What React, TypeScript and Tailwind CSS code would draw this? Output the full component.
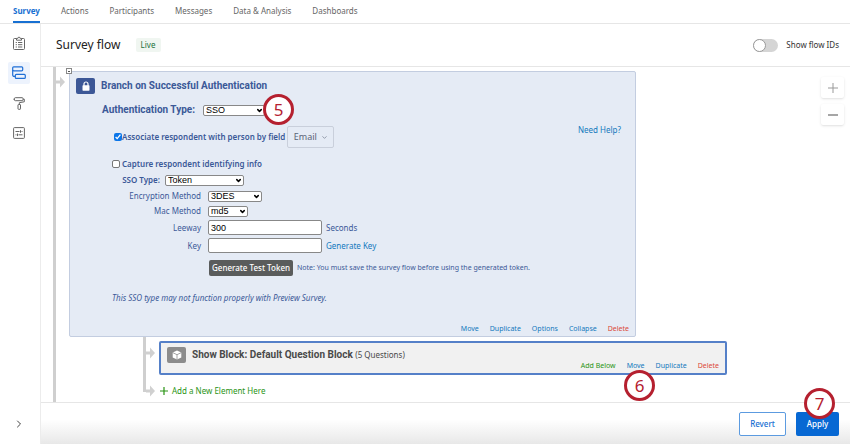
import { ChevronDown, ChevronRight } from 'lucide-react'

import React from 'react'

const NAV_ITEMS = [
  'Survey',
  'Actions',
  'Participants',
  'Messages',
  'Data & Analysis',
  'Dashboards',
]

function ClipboardIcon() {
  return (
    <svg width="12" height="14" viewBox="0 0 12 14" fill="none" stroke="#666" strokeWidth="1">
      <path d="M3.5 2.5H1.5a1 1 0 0 0-1 1v9a1 1 0 0 0 1 1h9a1 1 0 0 0 1-1v-9a1 1 0 0 0-1-1h-2" />
      <path d="M3.5 4.2V2.4H4.8a1.2 1.2 0 0 1 2.4 0H8.5v1.8z" />
      <path d="M2.7 6.5h1.2M5 6.5h4.3M2.7 8.7h1.2M5 8.7h4.3M2.7 11h1.2M5 11h4.3" />
    </svg>
  )
}

function FlowIcon() {
  return (
    <svg width="14" height="14" viewBox="0 0 14 14" fill="none" stroke="#1f6fd6" strokeWidth="1.2">
      <rect x="0.7" y="0.8" width="10" height="4" rx="1" />
      <rect x="3.3" y="8.4" width="10" height="4" rx="1" />
      <path d="M0.7 4v5a1.4 1.4 0 0 0 1.4 1.4h1.2" />
    </svg>
  )
}

function RollerIcon() {
  return (
    <svg width="12" height="13" viewBox="0 0 12 13" fill="none" stroke="#666" strokeWidth="1">
      <rect x="1.5" y="0.7" width="8.5" height="3" rx="0.8" />
      <path d="M1.5 2.2H0.3M10 2.2h1.3v2.6L6.3 5.7v1.8" />
      <rect x="5" y="7.5" width="2.5" height="4.8" rx="0.5" />
    </svg>
  )
}

function SettingsIcon() {
  return (
    <svg width="12" height="12" viewBox="0 0 12 12" fill="none" stroke="#666" strokeWidth="1">
      <rect x="0.6" y="0.6" width="10.8" height="10.8" rx="0.8" />
      <path d="M2.5 4.5h4M8.5 4.5h1M7.5 3.2v2.6M2.5 7.8h1M5.5 7.8h4M4.5 6.5v2.6" />
    </svg>
  )
}

function BranchArrow() {
  return (
    <svg width="9" height="12" viewBox="0 0 9 12" fill="#d0d0d0" className="shrink-0">
      <path d="M0 4.5h4V0.5L9 6l-5 5.5V7.5H0z" />
    </svg>
  )
}

interface StepBadgeProps {
  step: number
  className: string
}
function StepBadge({ step, className }: StepBadgeProps) {
  return (
    <span
      className={`absolute z-10 flex h-[31px] w-[31px] items-center justify-center rounded-full border-[3px] border-[#b5202f] bg-white text-[17px] leading-none text-[#b5202f] ${className}`}
    >
      {step}
    </span>
  )
}

interface FlowSelectProps {
  id: string
  options: string[]
  className: string
}
function FlowSelect({ id, options, className }: FlowSelectProps) {
  return (
    <div className={`relative ${className}`}>
      <select
        id={id}
        className="block h-[11px] w-full appearance-none rounded-xs border border-[#888] bg-white pl-0.5 font-['Liberation_Sans',sans-serif] text-[9px] leading-[9px] text-black"
      >
        {options.map((option) => (
          <option key={option}>{option}</option>
        ))}
      </select>
      <ChevronDown
        size={7}
        strokeWidth={5}
        className="pointer-events-none absolute top-0.5 right-0.5 text-black"
      />
    </div>
  )
}

interface ActionLinksProps {
  actions: string[]
}
function ActionLinks({ actions }: ActionLinksProps) {
  return (
    <div className="flex justify-end gap-[11px] text-[7px] leading-3 text-[#1379bd]">
      {actions.map((action) => (
        <a
          key={action}
          href="#"
          className={
            action === 'Delete'
              ? 'text-[#dc4a38]'
              : action === 'Add Below'
                ? 'text-[#2a9415]'
                : ''
          }
        >
          {action}
        </a>
      ))}
    </div>
  )
}

function AuthenticationBlock() {
  return (
    <section className="relative w-[567px] rounded-xs border border-[#c3cde0] bg-[#e5ebf5] pb-px text-[#3b5998]">
      <button
        aria-label="Collapse block"
        className="absolute -top-1 -left-1 flex h-1.5 w-1.5 items-center justify-center border border-[#888] bg-white"
      >
        <span className="h-px w-0.5 bg-[#555]" />
      </button>
      <div className="flex items-center gap-1.5 pt-1.5 pl-1.5">
        <span className="flex h-4 w-[19px] items-center justify-center rounded-xs bg-[#3c5796]">
          <svg width="8" height="10" viewBox="0 0 8 10">
            <path d="M2 5V3a2 2 0 0 1 4 0v2" fill="none" stroke="#fff" strokeWidth="1.2" />
            <rect x="0.5" y="4.3" width="7" height="5.4" rx="0.6" fill="#fff" />
          </svg>
        </span>
        <h2 className="font-[Roboto,sans-serif] text-[10px] leading-4 font-bold">
          Branch on Successful Authentication
        </h2>
      </div>
      <div className="relative mt-2 flex items-center gap-2 pl-8">
        <label
          htmlFor="auth-type"
          className="font-[Roboto,sans-serif] text-[10px] leading-4 font-bold"
        >
          Authentication Type:
        </label>
        <FlowSelect id="auth-type" options={['SSO']} className="w-[62px]" />
        <StepBadge step={5} className="-top-2 left-[193px]" />
      </div>
      <div className="mt-2 flex items-center pl-11">
        <label className="flex items-center text-[8px] leading-3 font-semibold">
          <input type="checkbox" defaultChecked className="h-2 w-2 accent-[#0b75e8]" />
          Associate respondent with person by field
        </label>
        <button className="ml-0.5 flex h-[22px] w-[47px] items-center justify-center gap-1 rounded-xs border border-[#c9cfdb] text-[9px] text-[#5b6478]">
          Email
          <ChevronDown size={7} />
        </button>
        <a href="#" className="mr-3.5 -mt-3.5 ml-auto text-[8px] leading-3 text-[#1379bd]">
          Need Help?
        </a>
      </div>
      <div className="mt-2.5 pl-[42px]">
        <label className="flex items-center gap-0.5 text-[8px] leading-3 font-semibold">
          <input
            type="checkbox"
            className="h-2 w-2 appearance-none rounded-xs border border-[#777] bg-white"
          />
          Capture respondent identifying info
        </label>
      </div>
      <div className="mt-1 flex items-center gap-[5px]">
        <label htmlFor="sso-type" className="w-[90px] text-right text-[8px] leading-3 font-semibold">
          SSO Type:
        </label>
        <FlowSelect id="sso-type" options={['Token']} className="w-[79px]" />
      </div>
      <div className="mt-1 grid grid-cols-[131px_1fr] items-center gap-x-[7px] gap-y-[3px] text-[8px] leading-3">
        <label htmlFor="encryption" className="text-right">
          Encryption Method
        </label>
        <FlowSelect id="encryption" options={['3DES']} className="w-[54px]" />
        <label htmlFor="mac" className="text-right">
          Mac Method
        </label>
        <FlowSelect id="mac" options={['md5']} className="w-10" />
        <label htmlFor="leeway" className="text-right">
          Leeway
        </label>
        <div className="flex items-center gap-1">
          <input
            id="leeway"
            defaultValue="300"
            className="h-[15px] w-[114px] rounded-xs border border-[#888] bg-white px-0.5 font-['Liberation_Sans',sans-serif] text-[9px] text-black"
          />
          Seconds
        </div>
        <label htmlFor="key" className="text-right">
          Key
        </label>
        <div className="flex items-center gap-1">
          <input
            id="key"
            className="h-[15px] w-[114px] rounded-xs border border-[#888] bg-white px-0.5 font-['Liberation_Sans',sans-serif] text-[9px] text-black"
          />
          <a href="#" className="text-[#1379bd]">
            Generate Key
          </a>
        </div>
      </div>
      <div className="mt-[7px] flex items-center gap-1 pl-[139px]">
        <button className="h-4 w-[84px] rounded-xs bg-[#5a5c5c] text-[8px] leading-4 font-medium whitespace-nowrap text-white">
          Generate Test Token
        </button>
        <span className="text-[7px]">
          Note: You must save the survey flow before using the generated token.
        </span>
      </div>
      <p className="mt-4 pl-[42px] text-[8px] leading-3 italic">
        This SSO type may not function properly with Preview Survey.
      </p>
      <div className="mt-[19px] pr-1.5">
        <ActionLinks actions={['Move', 'Duplicate', 'Options', 'Collapse', 'Delete']} />
      </div>
    </section>
  )
}

function QuestionBlock() {
  return (
    <section className="relative h-[34px] w-[568px] rounded-xs border-2 border-[#5580c8] bg-[#f1f1f1]">
      <div className="flex items-center gap-1.5 pt-1 pl-1.5">
        <span className="flex h-4 w-[19px] items-center justify-center rounded-xs bg-[#8c8c8c]">
          <svg width="10" height="10" viewBox="0 0 10 10">
            <path d="M5 0.5L9.3 2.6v4.8L5 9.6 0.7 7.4V2.6z" fill="#fff" />
            <path d="M0.7 2.6L5 4.7l4.3-2.1M5 4.7v4.9" fill="none" stroke="#8c8c8c" strokeWidth="0.8" />
          </svg>
        </span>
        <h3 className="font-[Roboto,sans-serif] text-[10px] leading-4 font-bold text-[#4a4a4a]">
          Show Block: Default Question Block{' '}
          <span className="font-['Noto_Sans',sans-serif] text-[8px] font-normal">
            (5 Questions)
          </span>
        </h3>
      </div>
      <div className="-mt-[3px] pr-1.5">
        <ActionLinks actions={['Add Below', 'Move', 'Duplicate', 'Delete']} />
      </div>
      <StepBadge step={6} className="top-[27px] right-[70px]" />
    </section>
  )
}

function App() {
  return (
    <div className="flex h-screen flex-col overflow-hidden bg-white font-['Noto_Sans',sans-serif] text-[#333]">
      <nav className="flex h-6 shrink-0 gap-[21px] border-b border-[#e6e6e6] pl-[13px] text-[8px] leading-[22px] text-[#666]">
        {NAV_ITEMS.map((item, index) => (
          <a
            key={item}
            href="#"
            className={index === 0 ? 'border-b-2 border-[#1770d2] font-bold text-[#1770d2]' : ''}
          >
            {item}
          </a>
        ))}
      </nav>
      <div className="flex min-h-0 flex-1">
        <aside className="flex w-[41px] shrink-0 flex-col items-center gap-2 border-r border-[#ececec] pt-2 pr-0.5">
          <button aria-label="Builder" className="flex h-[22px] w-[22px] items-center justify-center">
            <ClipboardIcon />
          </button>
          <button
            aria-label="Survey flow"
            className="flex h-[22px] w-[22px] items-center justify-center rounded-xs bg-[#edf3fd]"
          >
            <FlowIcon />
          </button>
          <button aria-label="Look and feel" className="flex h-[22px] w-[22px] items-center justify-center">
            <RollerIcon />
          </button>
          <button aria-label="Survey options" className="flex h-[22px] w-[22px] items-center justify-center">
            <SettingsIcon />
          </button>
          <button aria-label="Expand menu" className="mt-auto mb-3.5">
            <ChevronRight size={12} className="text-[#444]" />
          </button>
        </aside>
        <main className="flex min-w-0 flex-1 flex-col">
          <header className="flex h-[43px] shrink-0 items-center border-b border-[#e6e6e6] pr-[11px] pl-[15px]">
            <h1 className="text-[12px] leading-4 text-[#222]">Survey flow</h1>
            <span className="ml-[15px] flex h-3.5 w-[25px] items-center justify-center rounded-xs bg-[#f0f6f1] text-[8px] text-[#23713d]">
              Live
            </span>
            <label className="ml-auto flex items-center gap-2 text-[8px] text-[#333]">
              <input
                type="checkbox"
                className="h-[13px] w-[25px] appearance-none rounded-full bg-[#d5d5d5] before:block before:h-[13px] before:w-[13px] before:rounded-full before:border before:border-[#999] before:bg-white before:content-['']"
              />
              Show flow IDs
            </label>
          </header>
          <div className="relative flex min-h-0 flex-1 overflow-hidden">
            <div className="ml-3 flex self-stretch">
              <div className="w-[3px] bg-[#cfcfcf]" />
              <div className="pt-[9px]">
                <BranchArrow />
              </div>
            </div>
            <div className="ml-1 pt-1">
              <AuthenticationBlock />
              <div className="ml-[74px] flex">
                <div className="h-[55px] w-[3px] bg-[#cfcfcf]" />
                <div className="flex flex-col pt-1">
                  <div className="flex gap-1">
                    <div className="pt-1.5">
                      <BranchArrow />
                    </div>
                    <QuestionBlock />
                  </div>
                  <div className="mt-2.5 flex items-center gap-[5px]">
                    <BranchArrow />
                    <button className="flex items-center gap-1 text-[8px] leading-3 text-[#2a9415]">
                      <svg width="8" height="8" viewBox="0 0 8 8" stroke="#2a9415" strokeWidth="1.2">
                        <path d="M4 0v8M0 4h8" />
                      </svg>
                      Add a New Element Here
                    </button>
                  </div>
                </div>
              </div>
            </div>
            <div className="absolute top-2.5 right-1.5 flex flex-col gap-1.5">
              <button
                aria-label="Zoom in"
                className="flex h-[21px] w-[23px] items-center justify-center rounded-xs bg-white shadow-sm"
              >
                <svg width="10" height="10" viewBox="0 0 10 10" stroke="#999">
                  <path d="M5 0v10M0 5h10" />
                </svg>
              </button>
              <button
                aria-label="Zoom out"
                className="flex h-[21px] w-[23px] items-center justify-center rounded-xs bg-white shadow-sm"
              >
                <svg width="10" height="10" viewBox="0 0 10 10" stroke="#888" strokeWidth="1.5">
                  <path d="M0 5h10" />
                </svg>
              </button>
            </div>
          </div>
          <footer className="flex h-[42px] shrink-0 items-center justify-end gap-2.5 border-t border-[#e6e6e6] bg-linear-to-b from-white from-40% to-[#e8e8e8] pr-[11px]">
            <button className="h-6 w-[47px] rounded-xs border border-[#5c9be0] bg-white text-[8px] font-medium text-[#1770d2]">
              Revert
            </button>
            <div className="relative">
              <button className="block h-6 w-[43px] rounded-xs bg-[#0768d3] text-[8px] font-medium text-white">
                Apply
              </button>
              <StepBadge step={7} className="-top-6 left-2" />
            </div>
          </footer>
        </main>
      </div>
    </div>
  )
}

export default App
